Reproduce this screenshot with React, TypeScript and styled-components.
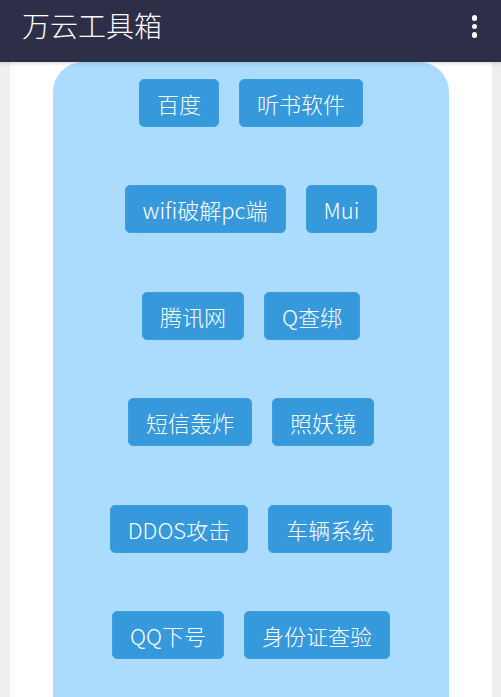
import React from "react";
import styled, { createGlobalStyle } from "styled-components";

const GlobalStyle = createGlobalStyle`
  html, body { margin: 0; padding: 0; background: #efefef; }
  body { font-family: "Noto Sans CJK SC", "Noto Sans", sans-serif; }
  * { box-sizing: border-box; }
`;

const Page = styled.div`
  width: 501px;
  height: 697px;
  overflow: hidden;
  display: flex;
  flex-direction: column;
  background: #efefef;
`;

const Header = styled.header`
  height: 62px;
  flex: none;
  background: #2d2e47;
  display: flex;
  align-items: flex-start;
  justify-content: space-between;
  padding: 5px 24px 0 22px;
  position: relative;
  z-index: 2;
  box-shadow: 0 1px 4px rgba(0, 0, 0, 0.18);
`;

const Title = styled.h1`
  margin: 0;
  color: #ffffff;
  font-size: 28px;
  font-weight: 300;
  line-height: 40px;
  letter-spacing: 0;
`;

const Menu = styled.div`
  display: flex;
  flex-direction: column;
  gap: 3px;
  padding-top: 10px;
`;

const Dot = styled.span`
  width: 5.5px;
  height: 5.5px;
  border-radius: 50%;
  background: #ffffff;
`;

const Panel = styled.main`
  flex: 1;
  margin: 0 9px 0 10px;
  background: #ffffff;
  display: flex;
  justify-content: center;
`;

const Card = styled.section`
  width: 396px;
  background: #acdcfd;
  border-radius: 30px 30px 0 0;
  padding-top: 17px;
  display: flex;
  flex-direction: column;
  gap: 58.4px;
`;

const Row = styled.div`
  display: flex;
  justify-content: center;
  gap: 20px;
`;

const Button = styled.button`
  height: 48px;
  padding: 0 17px;
  border: 1px solid #3d9fe0;
  border-radius: 5px;
  background: #3699dc;
  color: #ffffff;
  font-family: "Noto Sans CJK SC", "Noto Sans", sans-serif;
  font-size: 22px;
  font-weight: 300;
  line-height: 1;
  white-space: nowrap;
`;

const rows: string[][] = [
  ["百度", "听书软件"],
  ["wifi破解pc端", "Mui"],
  ["腾讯网", "Q查绑"],
  ["短信轰炸", "照妖镜"],
  ["DDOS攻击", "车辆系统"],
  ["QQ下号", "身份证查验"],
];

export default function App() {
  return (
    <>
      <GlobalStyle />
      <Page>
        <Header>
          <Title>万云工具箱</Title>
          <Menu>
            <Dot />
            <Dot />
            <Dot />
          </Menu>
        </Header>
        <Panel>
          <Card>
            {rows.map((r, i) => (
              <Row key={i}>
                {r.map((t) => (
                  <Button key={t}>{t}</Button>
                ))}
              </Row>
            ))}
          </Card>
        </Panel>
      </Page>
    </>
  );
}
